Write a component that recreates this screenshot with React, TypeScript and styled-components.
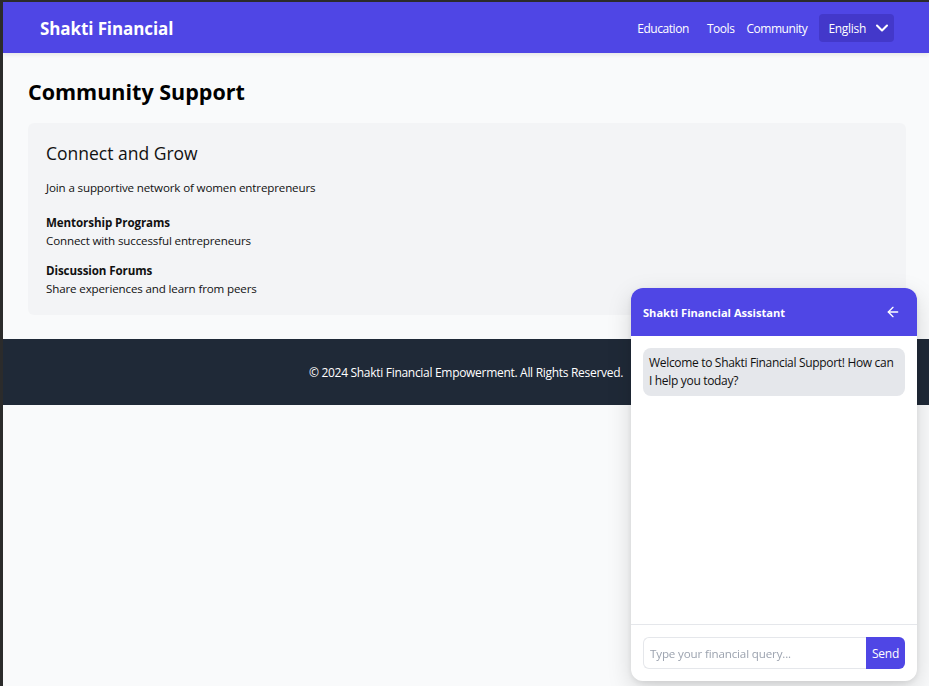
import React from "react";
import styled, { createGlobalStyle } from "styled-components";
import { ArrowLeft, ChevronDown } from "lucide-react";

const Global = createGlobalStyle`
  html, body { margin: 0; padding: 0; }
  body {
    background: #f9fafb;
    font-family: "Open Sans", "Noto Sans", sans-serif;
    color: #111827;
    border-left: 3px solid #2b2b2b;
    border-top: 2px solid #2b2b2b;
    min-height: 684px;
    box-sizing: border-box;
  }
  * { box-sizing: border-box; }
`;

const Page = styled.div`
  display: flex;
  flex-direction: column;
  min-height: 684px;
`;

const NavBar = styled.header`
  height: 51px;
  background: #4f46e5;
  color: #fff;
  display: flex;
  align-items: center;
  justify-content: space-between;
  padding: 1px 35px 0 37px;
  box-shadow: 0 2px 4px rgba(0, 0, 0, 0.08);
`;

const Brand = styled.div`
  font-size: 17px;
  font-weight: 700;
  letter-spacing: -0.1px;
`;

const NavLinks = styled.nav`
  display: flex;
  align-items: center;
  gap: 12px;
`;

const NavLink = styled.a<{ $extra?: number }>`
  font-size: 12px;
  letter-spacing: -0.45px;
  color: #fff;
  text-decoration: none;
  margin-right: ${(p) => p.$extra ?? 0}px;
`;

const LangSelect = styled.div`
  display: flex;
  align-items: center;
  gap: 6px;
  height: 28px;
  padding: 0 2px 0 9px;
  background: #4338ca;
  border-radius: 4px;
  font-size: 12px;
  letter-spacing: -0.3px;
  color: #fff;
`;

const Main = styled.main`
  padding: 24px 23px 24px 25px;
`;

const Title = styled.h1`
  margin: 0 0 16px;
  font-size: 21.5px;
  font-weight: 700;
  line-height: 30px;
  color: #000;
`;

const Card = styled.section`
  background: #f3f4f6;
  border-radius: 6px;
  padding: 18px 18px 17px;
`;

const CardTitle = styled.h2`
  margin: 0 0 14px;
  font-size: 17.5px;
  font-weight: 400;
  line-height: 24px;
  color: #111;
`;

const Lead = styled.p`
  margin: 0 0 17px;
  font-size: 11.6px;
  letter-spacing: -0.15px;
  line-height: 18px;
  color: #111;
`;

const Item = styled.div`
  margin-top: 12px;
  &:first-of-type { margin-top: 0; }
`;

const ItemTitle = styled.div`
  font-size: 11.6px;
  letter-spacing: -0.1px;
  font-weight: 700;
  line-height: 18px;
  color: #111;
`;

const ItemText = styled.div`
  font-size: 11.6px;
  letter-spacing: -0.15px;
  line-height: 18px;
  color: #111;
`;

const Footer = styled.footer`
  background: #1f2937;
  color: #fff;
  text-align: center;
  padding: 25px 24px 23px;
  font-size: 12px;
  letter-spacing: -0.3px;
  line-height: 18px;
`;

const Chat = styled.aside`
  position: fixed;
  right: 12px;
  bottom: 5px;
  width: 286px;
  height: 393px;
  background: #fff;
  border-radius: 12px;
  overflow: hidden;
  display: flex;
  flex-direction: column;
  box-shadow: 0 8px 24px rgba(0, 0, 0, 0.15), 0 2px 6px rgba(0, 0, 0, 0.08);
`;

const ChatHeader = styled.div`
  height: 48px;
  background: #4f46e5;
  color: #fff;
  display: flex;
  align-items: center;
  justify-content: space-between;
  padding: 0 16px 0 12px;
  font-size: 11.1px;
  font-weight: 700;
`;

const ChatBody = styled.div`
  flex: 1;
  padding: 12px;
`;

const Bubble = styled.div`
  background: #e5e7eb;
  border-radius: 8px;
  padding: 6px;
  font-size: 12px;
  letter-spacing: -0.32px;
  line-height: 18px;
  color: #111;
`;

const ChatInputRow = styled.div`
  border-top: 1px solid #e5e7eb;
  padding: 12px;
  display: flex;
`;

const Input = styled.input`
  flex: 1;
  height: 32px;
  border: 1px solid #e5e7eb;
  border-right: none;
  border-radius: 6px 0 0 6px;
  padding: 0 6px;
  font-family: inherit;
  font-size: 11.6px;
  letter-spacing: -0.15px;
  outline: none;
  &::placeholder { color: #9ca3af; }
`;

const SendButton = styled.button`
  width: 39px;
  height: 32px;
  border: none;
  border-radius: 0 6px 6px 0;
  background: #4f46e5;
  color: #fff;
  font-family: inherit;
  font-size: 12px;
  letter-spacing: -0.2px;
  padding: 0;
`;

export default function App() {
  return (
    <>
      <Global />
      <Page>
        <NavBar>
          <Brand>Shakti Financial</Brand>
          <NavLinks>
            <NavLink href="#" $extra={6}>Education</NavLink>
            <NavLink href="#">Tools</NavLink>
            <NavLink href="#">Community</NavLink>
            <LangSelect>
              English
              <ChevronDown size={20} strokeWidth={2.5} />
            </LangSelect>
          </NavLinks>
        </NavBar>
        <Main>
          <Title>Community Support</Title>
          <Card>
            <CardTitle>Connect and Grow</CardTitle>
            <Lead>Join a supportive network of women entrepreneurs</Lead>
            <Item>
              <ItemTitle>Mentorship Programs</ItemTitle>
              <ItemText>Connect with successful entrepreneurs</ItemText>
            </Item>
            <Item>
              <ItemTitle>Discussion Forums</ItemTitle>
              <ItemText>Share experiences and learn from peers</ItemText>
            </Item>
          </Card>
        </Main>
        <Footer>© 2024 Shakti Financial Empowerment. All Rights Reserved.</Footer>
      </Page>
      <Chat>
        <ChatHeader>
          Shakti Financial Assistant
          <ArrowLeft size={16} strokeWidth={2} />
        </ChatHeader>
        <ChatBody>
          <Bubble>Welcome to Shakti Financial Support! How can I help you today?</Bubble>
        </ChatBody>
        <ChatInputRow>
          <Input placeholder="Type your financial query..." />
          <SendButton>Send</SendButton>
        </ChatInputRow>
      </Chat>
    </>
  );
}
